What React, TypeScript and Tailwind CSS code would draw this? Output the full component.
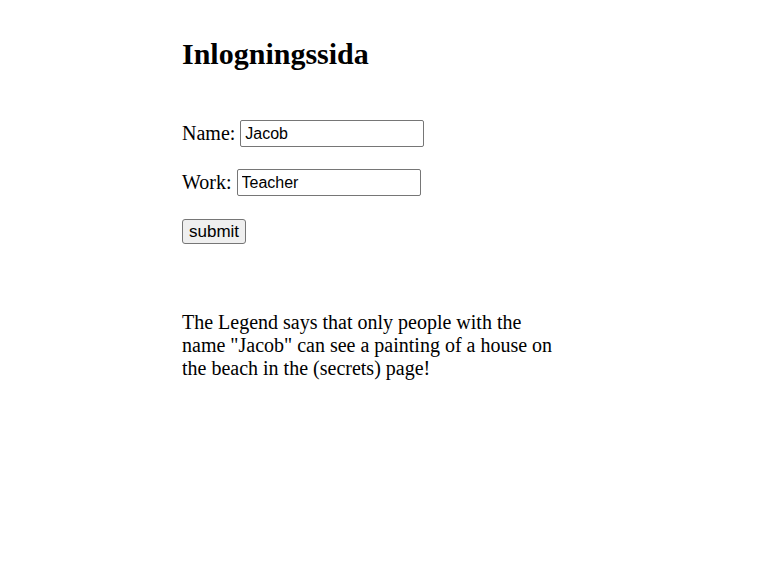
const App = () => {
  return (
    <div className="min-h-[564px] bg-white pl-[182px] pt-[37px] text-black font-['Liberation_Serif',serif]">
      <h1 className="text-[30px] font-bold leading-[34px]">Inlogningssida</h1>
      <form className="mt-[49px] flex flex-col items-start">
        <label className="flex items-center gap-[5px] text-[20px] leading-[27px]">
          Name:
          <input
            defaultValue="Jacob"
            className="w-[184px] h-[27px] rounded-[2px] border border-[#767676] px-[4px] text-[16px] font-['Liberation_Sans',sans-serif] outline-none"
          />
        </label>
        <label className="mt-[22px] flex items-center gap-[5px] text-[20px] leading-[27px]">
          Work:
          <input
            defaultValue="Teacher"
            className="w-[184px] h-[27px] rounded-[2px] border border-[#767676] px-[4px] text-[16px] font-['Liberation_Sans',sans-serif] outline-none"
          />
        </label>
        <button
          type="button"
          className="mt-[23px] h-[25px] px-[6px] rounded-[3px] border border-[#767676] bg-[#efefef] text-[17px] leading-none font-['Liberation_Sans',sans-serif]"
        >
          submit
        </button>
      </form>
      <p className="mt-[67px] w-[376px] text-[20px] leading-[23px]">
        The Legend says that only people with the name "Jacob" can see a painting of a house on the beach in the (secrets) page!
      </p>
    </div>
  )
}

export default App
